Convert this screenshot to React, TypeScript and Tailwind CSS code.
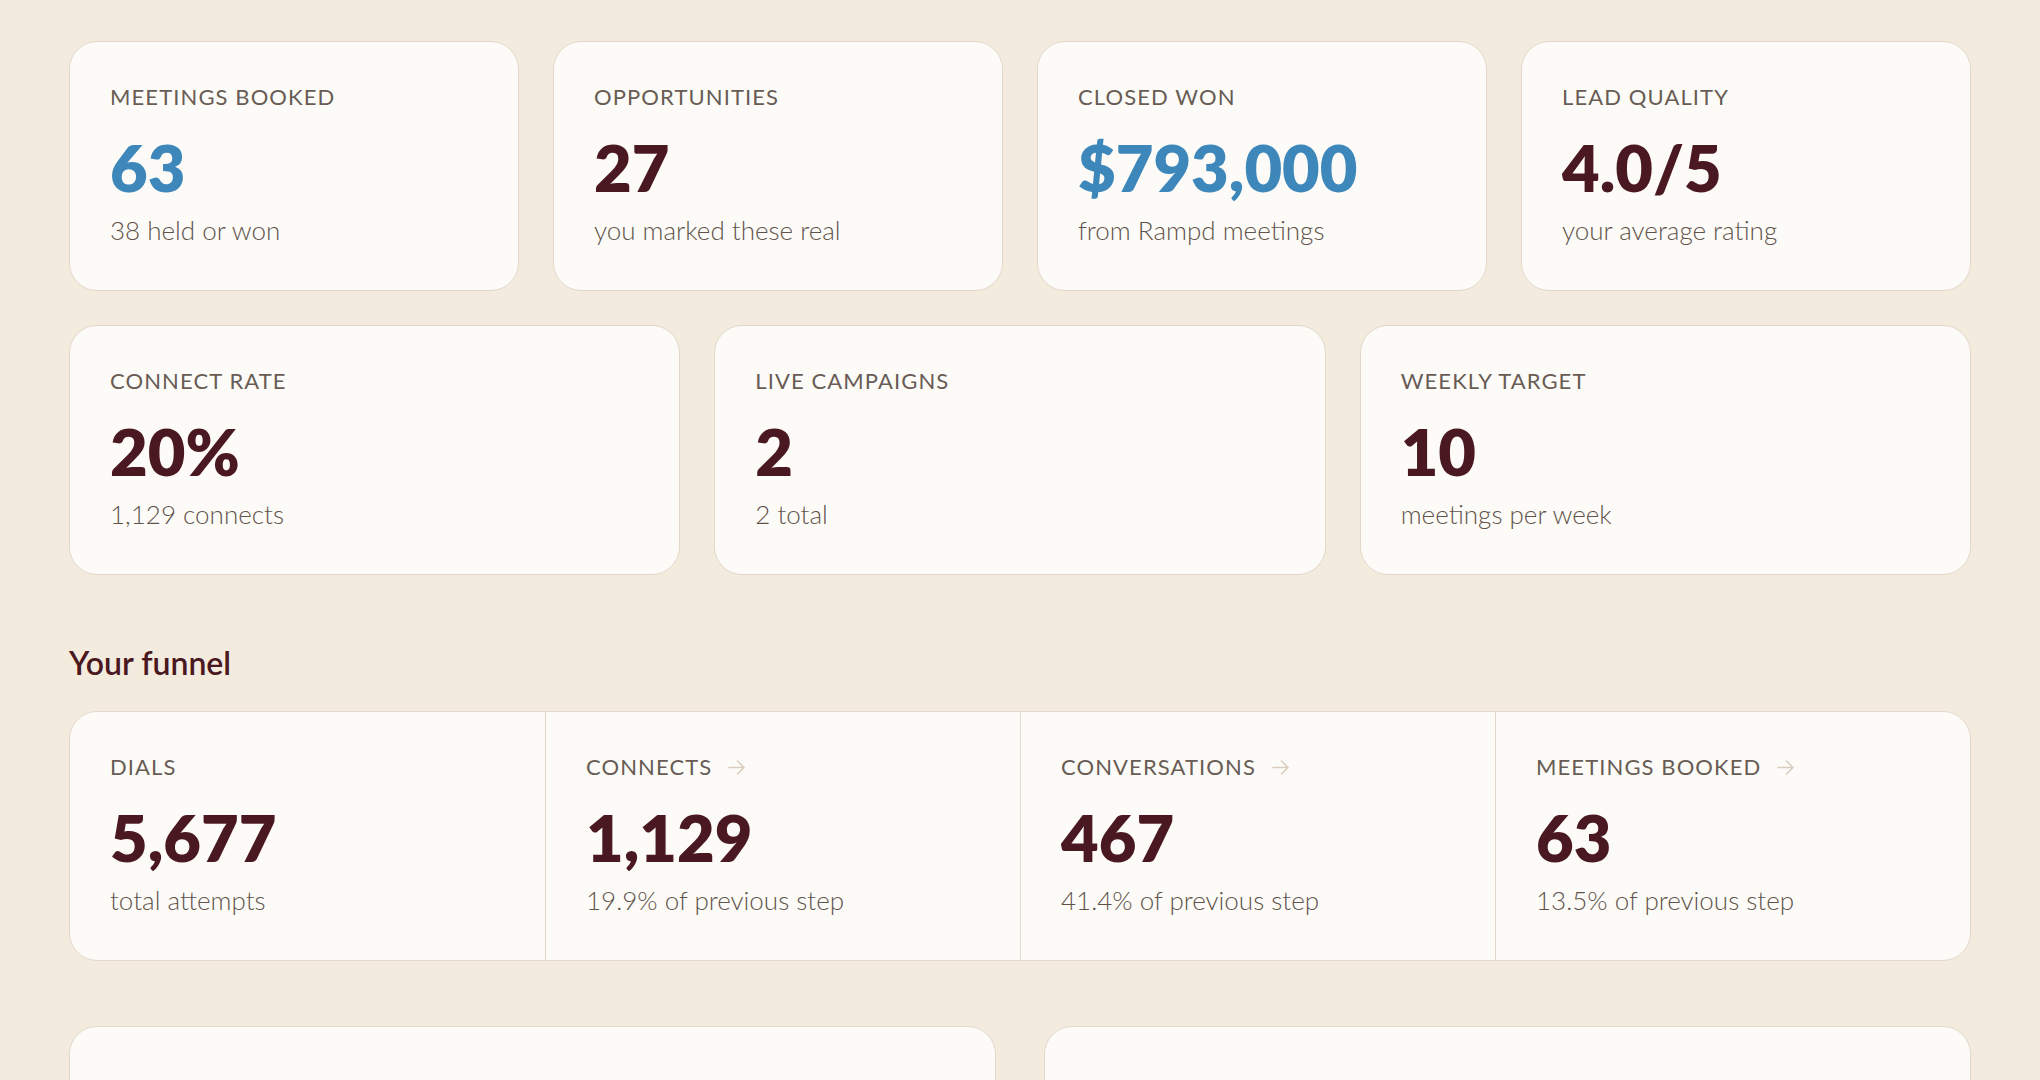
import { ReactNode } from 'react'

type Stat = { label: string; value: string; sub: string; accent?: boolean }

const topStats: Stat[] = [
  { label: 'Meetings booked', value: '63', sub: '38 held or won', accent: true },
  { label: 'Opportunities', value: '27', sub: 'you marked these real' },
  { label: 'Closed won', value: '$793,000', sub: 'from Rampd meetings', accent: true },
  { label: 'Lead quality', value: '4.0/5', sub: 'your average rating' },
]

const midStats: Stat[] = [
  { label: 'Connect rate', value: '20%', sub: '1,129 connects' },
  { label: 'Live campaigns', value: '2', sub: '2 total' },
  { label: 'Weekly target', value: '10', sub: 'meetings per week' },
]

const funnel = [
  { label: 'Dials', value: '5,677', sub: 'total attempts', arrow: false },
  { label: 'Connects', value: '1,129', sub: '19.9% of previous step', arrow: true },
  { label: 'Conversations', value: '467', sub: '41.4% of previous step', arrow: true },
  { label: 'Meetings booked', value: '63', sub: '13.5% of previous step', arrow: true },
]

function Arrow() {
  return (
    <svg width="18" height="15" viewBox="0 0 18 15" fill="none" className="ml-[16px] mt-[1px]">
      <path d="M1 7.5h15M9.5 1l6.5 6.5L9.5 14" stroke="#d9cdbf" strokeWidth="1.6" strokeLinecap="round" strokeLinejoin="round" />
    </svg>
  )
}

function StatBody({ label, value, sub, accent, arrow }: Stat & { arrow?: boolean }) {
  return (
    <div className="flex flex-col px-10 pt-[44px] pb-[47px]">
      <div className="flex items-center text-[22px] leading-none font-normal uppercase tracking-wider text-[#685c55]">
        {label}
        {arrow && <Arrow />}
      </div>
      <div
        className={`mt-[27px] text-[65px] leading-none font-extrabold ${accent ? 'text-[#3e87ba]' : 'text-[#4a1820]'}`}
      >
        {value}
      </div>
      <div className="mt-[17px] text-[26px] leading-none font-light text-[#5f534c]">{sub}</div>
    </div>
  )
}

function Card({ children, className = '' }: { children?: ReactNode; className?: string }) {
  return (
    <div className={`rounded-[28px] border-[1.5px] border-[#e2d7ca] bg-[#fdfbf7] ${className}`}>{children}</div>
  )
}

export default function App() {
  return (
    <div
      className="min-h-screen overflow-hidden bg-[#f4ebdf] px-[69px] pt-[41px]"
      style={{ fontFamily: 'Lato, "Noto Sans", sans-serif' }}
    >
      <div className="grid grid-cols-4 gap-[34px]">
        {topStats.map((s) => (
          <Card key={s.label}>
            <StatBody {...s} />
          </Card>
        ))}
      </div>

      <div className="mt-[34px] grid grid-cols-3 gap-[34px]">
        {midStats.map((s) => (
          <Card key={s.label}>
            <StatBody {...s} />
          </Card>
        ))}
      </div>

      <h2 className="mt-[68px] text-[32px] leading-[40px] font-semibold text-[#4a1820]">Your funnel</h2>

      <Card className="mt-[28px] grid grid-cols-4 overflow-hidden">
        {funnel.map((f, i) => (
          <div key={f.label} className={i > 0 ? 'border-l-[1.5px] border-[#e2d7ca]' : ''}>
            <StatBody label={f.label} value={f.value} sub={f.sub} arrow={f.arrow} />
          </div>
        ))}
      </Card>

      <div className="mt-[65px] grid grid-cols-2 gap-12">
        <Card className="h-[320px]" />
        <Card className="h-[320px]" />
      </div>
    </div>
  )
}
